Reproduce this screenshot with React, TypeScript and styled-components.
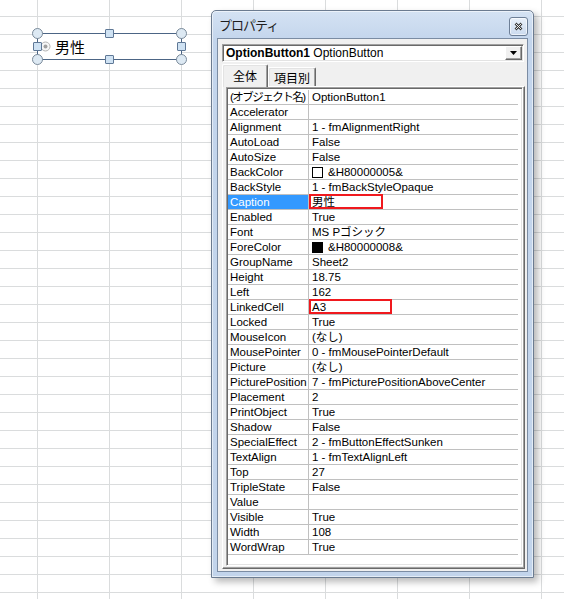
import * as React from 'react';
import styled, { createGlobalStyle } from 'styled-components';

type Prop = {
  name: string;
  value?: string;
  swatch?: string;
  selected?: boolean;
  mark?: number;
  squeeze?: number;
};

const props: Prop[] = [
  { name: '(オブジェクト名)', value: 'OptionButton1', squeeze: -1.5 },
  { name: 'Accelerator' },
  { name: 'Alignment', value: '1 - fmAlignmentRight' },
  { name: 'AutoLoad', value: 'False' },
  { name: 'AutoSize', value: 'False' },
  { name: 'BackColor', value: '&H80000005&', swatch: '#ffffff' },
  { name: 'BackStyle', value: '1 - fmBackStyleOpaque' },
  { name: 'Caption', value: '男性', selected: true, mark: 74 },
  { name: 'Enabled', value: 'True' },
  { name: 'Font', value: 'MS Pゴシック' },
  { name: 'ForeColor', value: '&H80000008&', swatch: '#000000' },
  { name: 'GroupName', value: 'Sheet2' },
  { name: 'Height', value: '18.75' },
  { name: 'Left', value: '162' },
  { name: 'LinkedCell', value: 'A3', mark: 83 },
  { name: 'Locked', value: 'True' },
  { name: 'MouseIcon', value: '(なし)' },
  { name: 'MousePointer', value: '0 - fmMousePointerDefault' },
  { name: 'Picture', value: '(なし)' },
  { name: 'PicturePosition', value: '7 - fmPicturePositionAboveCenter' },
  { name: 'Placement', value: '2' },
  { name: 'PrintObject', value: 'True' },
  { name: 'Shadow', value: 'False' },
  { name: 'SpecialEffect', value: '2 - fmButtonEffectSunken' },
  { name: 'TextAlign', value: '1 - fmTextAlignLeft' },
  { name: 'Top', value: '27' },
  { name: 'TripleState', value: 'False' },
  { name: 'Value' },
  { name: 'Visible', value: 'True' },
  { name: 'Width', value: '108' },
  { name: 'WordWrap', value: 'True' },
];

// handle centres, relative to the shape's outer box
const handles: { x: number; y: number; round: boolean }[] = [
  { x: 0, y: 0, round: true },
  { x: 72, y: 0, round: false },
  { x: 144, y: 0, round: true },
  { x: 0, y: 13, round: false },
  { x: 144, y: 13, round: false },
  { x: 0, y: 26, round: true },
  { x: 72, y: 26, round: false },
  { x: 144, y: 26, round: true },
];

const App: React.FC = () => {
  return (
    <>
      <GlobalStyle />
      <Sheet>
        <Shape>
          <Radio width="11" height="11" viewBox="0 0 11 11">
            <circle cx="5.5" cy="5.5" r="4.5" fill="#f6f6f6" stroke="#b4b4b4" />
            <circle cx="5.5" cy="5.5" r="2" fill="#a0a0a0" />
          </Radio>
          <ShapeLabel>男性</ShapeLabel>
          {handles.map((h, i) => (
            <Handle key={i} round={h.round} style={{ left: h.x - (h.round ? 5.5 : 4.5), top: h.y - (h.round ? 5.5 : 4.5) }} />
          ))}
        </Shape>

        <Window>
          <TitleBar>
            <Title>プロパティ</Title>
            <CloseButton>
              <svg width="9" height="9" viewBox="0 0 9 9">
                <path d="M1.5 1.5 L7.5 7.5 M7.5 1.5 L1.5 7.5" stroke="#3a3a3a" strokeWidth="2.6" />
                <path d="M1.8 1.8 L7.2 7.2 M7.2 1.8 L1.8 7.2" stroke="#ffffff" strokeWidth="0.9" />
              </svg>
            </CloseButton>
          </TitleBar>

          <Client>
            <Combo>
              <ComboText>
                <b>OptionButton1</b> OptionButton
              </ComboText>
              <DropButton>
                <svg width="7" height="4" viewBox="0 0 7 4">
                  <path d="M0 0 H7 L3.5 4 Z" fill="#000" />
                </svg>
              </DropButton>
            </Combo>

            <Tabs>
              <Tab active>全体</Tab>
              <Tab>項目別</Tab>
            </Tabs>

            <TabPanel>
              <List>
                {props.map((p) => (
                  <Row key={p.name}>
                    <NameCell selected={p.selected} squeeze={p.squeeze}>
                      {p.name}
                    </NameCell>
                    <ValueCell>
                      {p.swatch && <Swatch color={p.swatch} />}
                      {p.value}
                      {p.mark && <Mark width={p.mark} />}
                    </ValueCell>
                  </Row>
                ))}
              </List>
            </TabPanel>
          </Client>
        </Window>
      </Sheet>
    </>
  );
};

const GlobalStyle = createGlobalStyle`
  html, body {
    margin: 0;
    padding: 0;
    background: #ffffff;
  }
  body {
    font-family: 'Liberation Sans', 'Noto Sans CJK JP', sans-serif;
    color: #000;
  }
`;

const Sheet = styled.div`
  position: relative;
  width: 564px;
  height: 599px;
  overflow: hidden;
  background-color: #ffffff;
  background-image: linear-gradient(to right, #dadcdd 1px, transparent 1px),
    linear-gradient(to bottom, #dadcdd 1px, transparent 1px);
  background-size: 72px 100%, 100% 18px;
  background-position: 37px 0, 0 16px;
`;

const Shape = styled.div`
  position: absolute;
  left: 37px;
  top: 33px;
  width: 145px;
  height: 27px;
  box-sizing: border-box;
  border: 1px solid #4c6585;
  background: #ffffff;
  display: flex;
  align-items: center;
  padding-left: 2px;
`;

const Radio = styled.svg`
  display: block;
`;

const ShapeLabel = styled.span`
  margin-left: 4px;
  font-family: 'Noto Sans CJK JP', sans-serif;
  font-size: 15px;
  line-height: 1;
`;

const Handle = styled.div<{ round: boolean }>`
  position: absolute;
  box-sizing: border-box;
  width: ${(p) => (p.round ? 11 : 9)}px;
  height: ${(p) => (p.round ? 11 : 9)}px;
  margin: -1px 0 0 -1px;
  border: 1px solid ${(p) => (p.round ? '#7a8a9a' : '#5f7896')};
  border-radius: ${(p) => (p.round ? '50%' : '1px')};
  background: ${(p) => (p.round ? '#dde9f3' : '#cfe2f3')};
`;

const Window = styled.div`
  position: absolute;
  left: 211px;
  top: 10px;
  width: 323px;
  height: 568px;
  box-sizing: border-box;
  display: flex;
  flex-direction: column;
  border: 1px solid #6b7b90;
  border-radius: 5px 5px 0 0;
  background: linear-gradient(#d4e2f3, #c3d5ec 30px, #c2d4eb);
  box-shadow: inset 0 0 0 1px rgba(255, 255, 255, 0.55), 4px 4px 7px rgba(0, 0, 0, 0.28);
`;

const TitleBar = styled.div`
  height: 27px;
  display: flex;
  align-items: center;
  justify-content: space-between;
  padding: 0 5px 0 7px;
`;

const Title = styled.span`
  font-family: 'Noto Sans CJK JP', sans-serif;
  font-size: 13px;
  letter-spacing: -1px;
  color: #1e1e1e;
`;

const CloseButton = styled.div`
  width: 19px;
  height: 19px;
  margin-top: 4px;
  box-sizing: border-box;
  display: flex;
  align-items: center;
  justify-content: center;
  border: 1px solid #6d7f97;
  border-radius: 3px;
  background: linear-gradient(#eaf1fa, #cbdaee);
  box-shadow: inset 0 0 0 1px rgba(255, 255, 255, 0.6);
`;

const Client = styled.div`
  flex: 1;
  margin: 0 5px 5px 5px;
  display: flex;
  flex-direction: column;
  padding: 5px 2px 2px 4px;
  background: #f0f0f0;
  border: 1px solid #7b8ca3;
`;

const Combo = styled.div`
  height: 18px;
  box-sizing: border-box;
  display: flex;
  align-items: stretch;
  background: #ffffff;
  border: 1px solid;
  border-color: #a0a0a0 #ffffff #ffffff #a0a0a0;
  box-shadow: inset 1px 1px 0 #696969, inset -1px -1px 0 #e3e3e3;
  padding: 1px;
  margin-right: 1px;
`;

const ComboText = styled.div`
  flex: 1;
  padding-left: 2px;
  font-size: 12px;
  line-height: 14px;
  white-space: nowrap;
  overflow: hidden;

  b {
    font-weight: bold;
  }
`;

const DropButton = styled.div`
  width: 17px;
  box-sizing: border-box;
  display: flex;
  align-items: center;
  justify-content: center;
  background: #f0f0f0;
  border: 1px solid;
  border-color: #ffffff #696969 #696969 #ffffff;
  box-shadow: inset -1px -1px 0 #a0a0a0;
`;

const Tabs = styled.div`
  height: 22px;
  margin-top: 2px;
  display: flex;
  align-items: flex-end;
  position: relative;
  z-index: 1;
`;

const Tab = styled.div<{ active?: boolean }>`
  box-sizing: border-box;
  height: ${(p) => (p.active ? 23 : 19)}px;
  margin-bottom: ${(p) => (p.active ? -1 : 0)}px;
  padding: 0 ${(p) => (p.active ? 10 : 5)}px;
  display: flex;
  align-items: ${(p) => (p.active ? 'flex-start' : 'center')};
  padding-top: ${(p) => (p.active ? 2 : 0)}px;
  font-family: 'Noto Sans CJK JP', sans-serif;
  font-size: 12px;
  background: #f0f0f0;
  border: 1px solid;
  border-bottom: none;
  border-color: #ffffff #696969 #696969 #ffffff;
  border-radius: 2px 2px 0 0;
  box-shadow: inset -1px 0 0 #a0a0a0, inset 1px 1px 0 #e3e3e3;
`;

const TabPanel = styled.div`
  flex: 1;
  display: flex;
  padding: 0 1px 2px 3px;
  border: 1px solid;
  border-color: #ffffff #696969 #696969 #ffffff;
  box-shadow: inset -1px -1px 0 #a0a0a0;
`;

const List = styled.div`
  flex: 1;
  background: #ffffff;
  border: 1px solid;
  border-color: #a0a0a0 #ffffff #ffffff #a0a0a0;
  box-shadow: inset 1px 1px 0 #696969, inset -1px -1px 0 #e3e3e3;
  padding: 2px 4px 1px 1px;
  overflow: hidden;
`;

const Row = styled.div`
  height: 15px;
  box-sizing: border-box;
  display: grid;
  grid-template-columns: 81px 1fr;
  border-bottom: 1px solid #c0c0c0;
  font-size: 11.5px;
  line-height: 14px;
  white-space: nowrap;
`;

const NameCell = styled.div<{ selected?: boolean; squeeze?: number }>`
  padding-left: 2px;
  overflow: hidden;
  border-right: 1px solid #c0c0c0;
  background: ${(p) => (p.selected ? '#3399ff' : 'transparent')};
  color: ${(p) => (p.selected ? '#ffffff' : '#000000')};
  letter-spacing: ${(p) => p.squeeze ?? 0}px;
`;

const ValueCell = styled.div`
  position: relative;
  display: flex;
  align-items: center;
  padding-left: 3px;
`;

const Swatch = styled.span<{ color: string }>`
  width: 11px;
  height: 11px;
  box-sizing: border-box;
  margin-right: 5px;
  border: 1px solid #000;
  background: ${(p) => p.color};
`;

const Mark = styled.span<{ width: number }>`
  position: absolute;
  left: 0;
  top: -1px;
  width: ${(p) => p.width}px;
  height: 15px;
  box-sizing: border-box;
  border: 2px solid #f0191e;
`;

export default App;
